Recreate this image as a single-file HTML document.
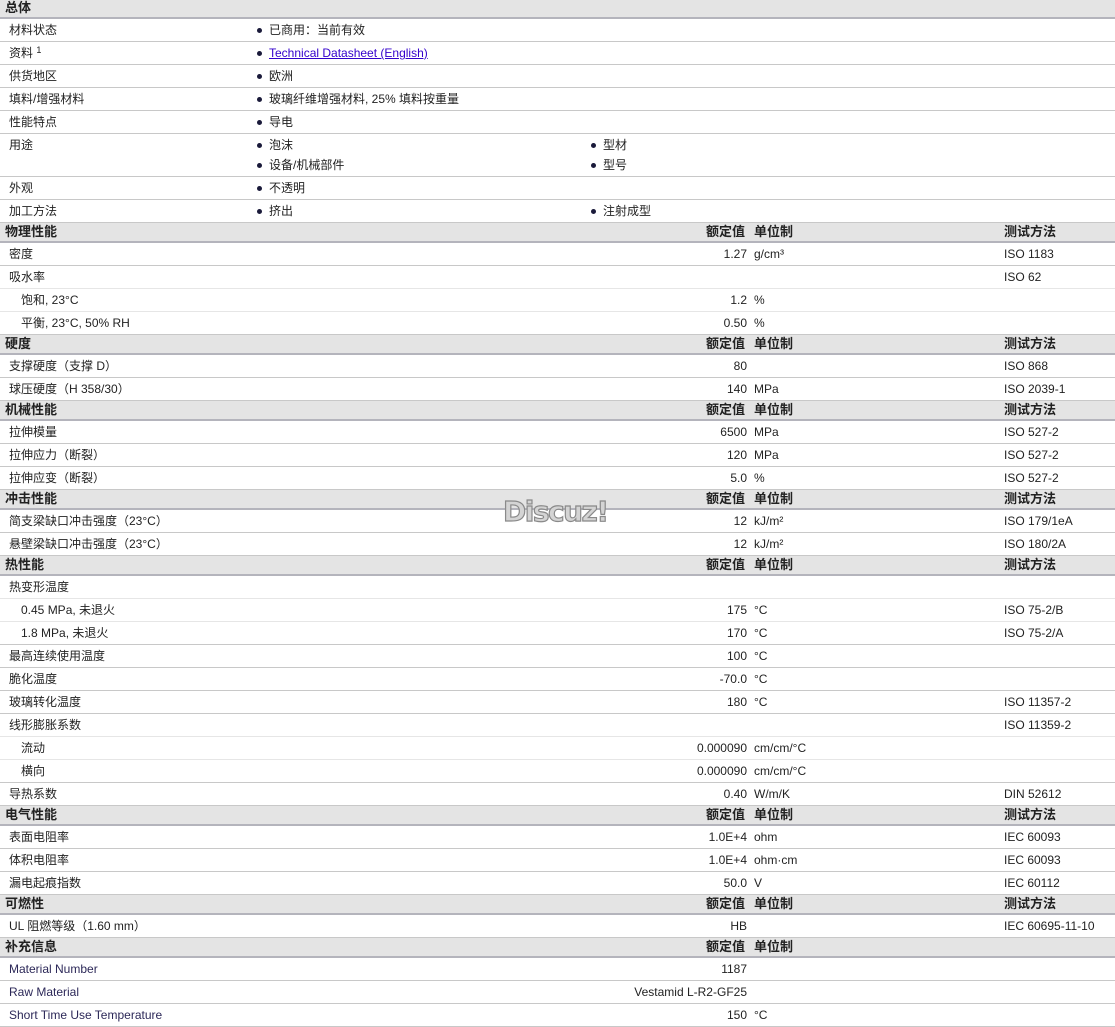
<!DOCTYPE html>
<html><head><meta charset="utf-8">
<style>
html,body{margin:0;padding:0;background:#fff;}
body{width:1115px;height:1025px;overflow:hidden;position:relative;font-family:"Liberation Sans","Noto Sans CJK SC",sans-serif;font-size:12px;color:#222;}
.row{position:absolute;left:0;width:1115px;box-sizing:border-box;}
.h{height:20px;background:#e4e4e4;border-bottom:2px solid #b4b4bc;font-weight:bold;font-size:13px;}
.r{height:23px;border-bottom:1px solid #c8c8c8;}
.l{border-bottom-color:#e6e6e6;}
.row span{position:absolute;white-space:nowrap;line-height:14px;height:14px;}
.h span{top:2px;}
.r span{top:4px;}
.lab{left:9px;}
.sub{left:21px;}
.v{right:368px;text-align:right;}
.u{left:754px;}
.m{left:1004px;}
.b1{left:269px;}
.b2{left:603px;}
.b1:before,.b2:before{content:"";position:absolute;left:-12px;top:5px;width:5px;height:5px;border-radius:50%;background:#1a1a3a;}
.hv{left:706px;}
.hu{left:754px;}
.hm{left:1004px;}
a{color:#3300cc;text-decoration:underline;}
.lat{color:#2c2858;}
sup{font-size:9px;vertical-align:top;line-height:9px;}
.wm{position:absolute;left:503px;top:496px;font:bold 28px "DejaVu Sans","Liberation Sans",sans-serif;color:#d4d4d4;-webkit-text-stroke:1.2px #8a8a8a;letter-spacing:-1.5px;line-height:32px;}
</style></head><body>

<div class="row h" style="top:0;height:19px"><span class="lab" style="left:5px;top:1px">总体</span></div>
<div class="row r" style="top:19px"><span class="lab">材料状态</span><span class="b1">已商用：当前有效</span></div>
<div class="row r" style="top:42px"><span class="lab">资料 <sup>1</sup></span><span class="b1"><a>Technical Datasheet (English)</a></span></div>
<div class="row r" style="top:65px"><span class="lab">供货地区</span><span class="b1">欧洲</span></div>
<div class="row r" style="top:88px"><span class="lab">填料/增强材料</span><span class="b1">玻璃纤维增强材料, 25% 填料按重量</span></div>
<div class="row r" style="top:111px"><span class="lab">性能特点</span><span class="b1">导电</span></div>
<div class="row r" style="top:134px;height:43px"><span class="lab">用途</span><span class="b1">泡沫</span><span class="b2">型材</span><span class="b1" style="top:24px">设备/机械部件</span><span class="b2" style="top:24px">型号</span></div>
<div class="row r" style="top:177px"><span class="lab">外观</span><span class="b1">不透明</span></div>
<div class="row r" style="top:200px"><span class="lab">加工方法</span><span class="b1">挤出</span><span class="b2">注射成型</span></div>

<div class="row h" style="top:223px"><span class="lab" style="left:5px">物理性能</span><span class="hv">额定值</span><span class="hu">单位制</span><span class="hm">测试方法</span></div>
<div class="row r" style="top:243px"><span class="lab">密度</span><span class="v">1.27</span><span class="u">g/cm³</span><span class="m">ISO 1183</span></div>
<div class="row r l" style="top:266px"><span class="lab">吸水率</span><span class="m">ISO 62</span></div>
<div class="row r l" style="top:289px"><span class="sub">饱和, 23°C</span><span class="v">1.2</span><span class="u">%</span></div>
<div class="row r" style="top:312px"><span class="sub">平衡, 23°C, 50% RH</span><span class="v">0.50</span><span class="u">%</span></div>

<div class="row h" style="top:335px"><span class="lab" style="left:5px">硬度</span><span class="hv">额定值</span><span class="hu">单位制</span><span class="hm">测试方法</span></div>
<div class="row r" style="top:355px"><span class="lab">支撑硬度（支撑 D）</span><span class="v">80</span><span class="m">ISO 868</span></div>
<div class="row r" style="top:378px"><span class="lab">球压硬度（H 358/30）</span><span class="v">140</span><span class="u">MPa</span><span class="m">ISO 2039-1</span></div>

<div class="row h" style="top:401px"><span class="lab" style="left:5px">机械性能</span><span class="hv">额定值</span><span class="hu">单位制</span><span class="hm">测试方法</span></div>
<div class="row r" style="top:421px"><span class="lab">拉伸模量</span><span class="v">6500</span><span class="u">MPa</span><span class="m">ISO 527-2</span></div>
<div class="row r" style="top:444px"><span class="lab">拉伸应力（断裂）</span><span class="v">120</span><span class="u">MPa</span><span class="m">ISO 527-2</span></div>
<div class="row r" style="top:467px"><span class="lab">拉伸应变（断裂）</span><span class="v">5.0</span><span class="u">%</span><span class="m">ISO 527-2</span></div>

<div class="row h" style="top:490px"><span class="lab" style="left:5px">冲击性能</span><span class="hv">额定值</span><span class="hu">单位制</span><span class="hm">测试方法</span></div>
<div class="row r" style="top:510px"><span class="lab">简支梁缺口冲击强度（23°C）</span><span class="v">12</span><span class="u">kJ/m²</span><span class="m">ISO 179/1eA</span></div>
<div class="row r" style="top:533px"><span class="lab">悬壁梁缺口冲击强度（23°C）</span><span class="v">12</span><span class="u">kJ/m²</span><span class="m">ISO 180/2A</span></div>

<div class="row h" style="top:556px"><span class="lab" style="left:5px">热性能</span><span class="hv">额定值</span><span class="hu">单位制</span><span class="hm">测试方法</span></div>
<div class="row r l" style="top:576px"><span class="lab">热变形温度</span></div>
<div class="row r l" style="top:599px"><span class="sub">0.45 MPa, 未退火</span><span class="v">175</span><span class="u">°C</span><span class="m">ISO 75-2/B</span></div>
<div class="row r" style="top:622px"><span class="sub">1.8 MPa, 未退火</span><span class="v">170</span><span class="u">°C</span><span class="m">ISO 75-2/A</span></div>
<div class="row r" style="top:645px"><span class="lab">最高连续使用温度</span><span class="v">100</span><span class="u">°C</span></div>
<div class="row r" style="top:668px"><span class="lab">脆化温度</span><span class="v">-70.0</span><span class="u">°C</span></div>
<div class="row r" style="top:691px"><span class="lab">玻璃转化温度</span><span class="v">180</span><span class="u">°C</span><span class="m">ISO 11357-2</span></div>
<div class="row r l" style="top:714px"><span class="lab">线形膨胀系数</span><span class="m">ISO 11359-2</span></div>
<div class="row r l" style="top:737px"><span class="sub">流动</span><span class="v">0.000090</span><span class="u">cm/cm/°C</span></div>
<div class="row r" style="top:760px"><span class="sub">横向</span><span class="v">0.000090</span><span class="u">cm/cm/°C</span></div>
<div class="row r" style="top:783px"><span class="lab">导热系数</span><span class="v">0.40</span><span class="u">W/m/K</span><span class="m">DIN 52612</span></div>

<div class="row h" style="top:806px"><span class="lab" style="left:5px">电气性能</span><span class="hv">额定值</span><span class="hu">单位制</span><span class="hm">测试方法</span></div>
<div class="row r" style="top:826px"><span class="lab">表面电阻率</span><span class="v">1.0E+4</span><span class="u">ohm</span><span class="m">IEC 60093</span></div>
<div class="row r" style="top:849px"><span class="lab">体积电阻率</span><span class="v">1.0E+4</span><span class="u">ohm·cm</span><span class="m">IEC 60093</span></div>
<div class="row r" style="top:872px"><span class="lab">漏电起痕指数</span><span class="v">50.0</span><span class="u">V</span><span class="m">IEC 60112</span></div>

<div class="row h" style="top:895px"><span class="lab" style="left:5px">可燃性</span><span class="hv">额定值</span><span class="hu">单位制</span><span class="hm">测试方法</span></div>
<div class="row r" style="top:915px"><span class="lab">UL 阻燃等级（1.60 mm）</span><span class="v">HB</span><span class="m">IEC 60695-11-10</span></div>

<div class="row h" style="top:938px"><span class="lab" style="left:5px">补充信息</span><span class="hv">额定值</span><span class="hu">单位制</span></div>
<div class="row r" style="top:958px"><span class="lab lat">Material Number</span><span class="v">1187</span></div>
<div class="row r" style="top:981px"><span class="lab lat">Raw Material</span><span class="v">Vestamid L-R2-GF25</span></div>
<div class="row r" style="top:1004px"><span class="lab lat">Short Time Use Temperature</span><span class="v">150</span><span class="u">°C</span></div>

<div class="wm">Discuz!</div>
</body></html>
